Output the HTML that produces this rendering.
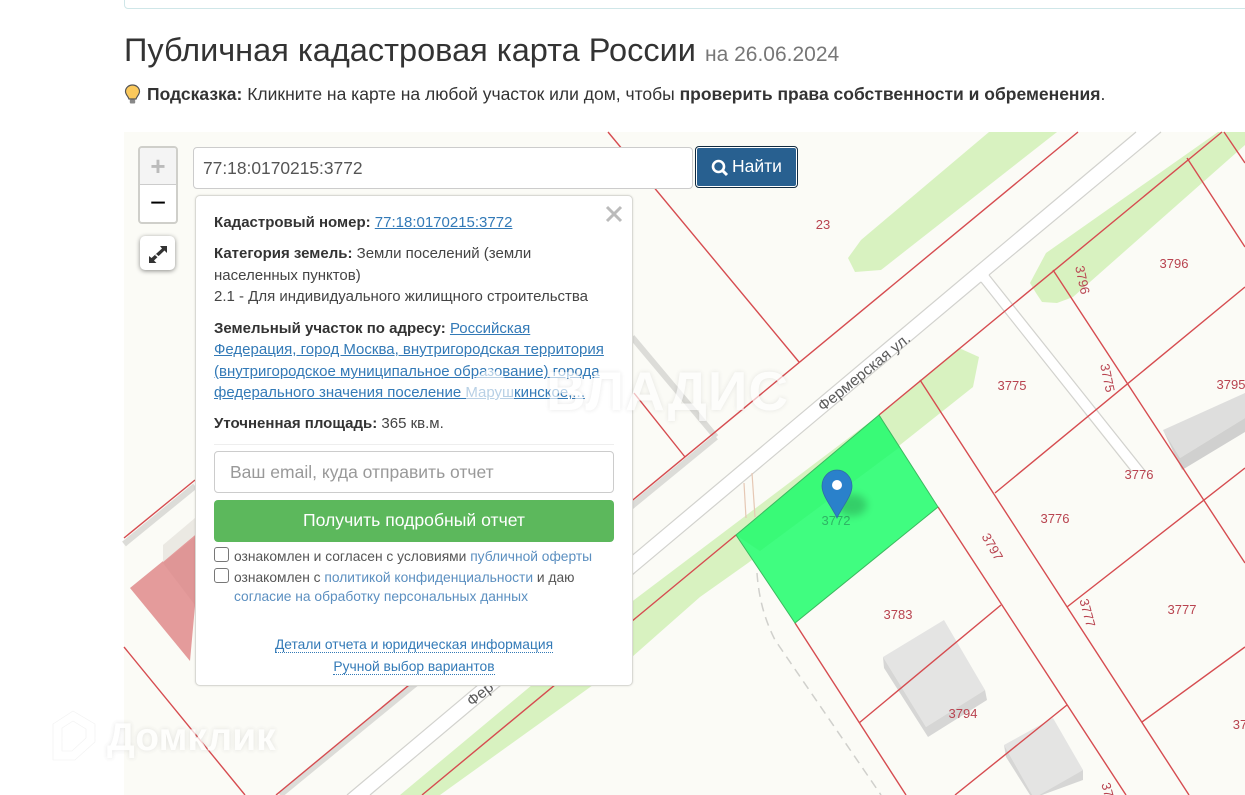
<!DOCTYPE html>
<html lang="ru"><head><meta charset="utf-8"><title>Публичная кадастровая карта России</title>
<style>
html,body{margin:0;padding:0;background:#fff;width:1245px;height:795px;overflow:hidden}
body{position:relative;font-family:"Liberation Sans","Noto Sans CJK SC",sans-serif;color:#333;font-size:15px}
.a{position:absolute;white-space:nowrap}
a{color:#337ab7;text-decoration:underline}
#panel{position:absolute;left:195px;top:195px;width:436px;height:489px;background:#fff;border:1px solid #d9d9d4;border-radius:5px;box-shadow:0 0 2px rgba(0,0,0,.12)}
.t{position:absolute;left:18px;white-space:nowrap;line-height:20px;height:20px;color:#444;font-size:15px}
.t b{color:#333}
.s{font-size:13.8px;color:#555}
.wm{position:absolute;color:#fff;font-weight:bold;white-space:nowrap;text-shadow:0 0 5px rgba(90,90,90,.22)}
.cb{position:absolute;left:18px;width:13px;height:13px;border:1px solid #777;border-radius:3px;background:#fff}
.lk{color:#5b8fc0;text-decoration:none}
.d{color:#337ab7;text-decoration:none;border-bottom:1px dotted #337ab7}
</style></head><body>
<div style="position:absolute;left:124px;top:-20px;width:1140px;height:27px;border:1px solid #cfe6e8;border-radius:4px"></div>
<div class="a" style="left:124px;top:30px;font-size:32.5px;line-height:40px;color:#333">Публичная кадастровая карта России</div>
<div class="a" style="left:705px;top:35px;font-size:21px;line-height:40px;color:#777">на 26.06.2024</div>
<svg style="position:absolute;left:124px;top:84px" width="17" height="21" viewBox="0 0 17 21"><path d="M8.500 1C4.500 1 1.500 4 1.500 7.500C1.500 10.500 4 12 5 15H12C13 12 15.500 10.500 15.500 7.500C15.500 4 12.500 1 8.500 1Z" fill="#fbc95c" stroke="#555" stroke-width="1.200"/><rect x="5.800" y="15.500" width="5.400" height="4" rx="1" fill="#888"/></svg>
<div class="a" style="left:147px;top:84px;font-size:17.5px;line-height:20px;color:#333"><b>Подсказка:</b> Кликните на карте на любой участок или дом, чтобы <b>проверить права собственности и обременения</b>.</div>

<svg style="position:absolute;left:0;top:0" width="1245" height="795" viewBox="0 0 1245 795">
<rect x="124" y="132" width="1121" height="663" fill="#fbfbf6"/>
<g fill="#d8f2c0">
<path d="M989 132H1057L881 270L855 272L848 258L861 240Z"/>
<path d="M1218 132H1245V145L1073 297L1057 303L1042 302L1036 293L1030 283L1046 253Z"/>
<path d="M959 348L979 357L973 387L900 445L748 563L700 597L632 657L440 795H400L634 600L879 415Z"/>
</g>
<g fill="none" stroke="#dcdcd8" stroke-width="6"><path d="M716 437L280 795"/><path d="M632 337L716 437"/><path d="M195 486L124 544"/></g>
<path d="M1136 132L347 795H370L1161 132Z" fill="#fff"/>
<path d="M981 282L989 275L1144 470L1132 470Z" fill="#fff"/>
<g fill="none" stroke="#d2d2ce" stroke-width="1.200">
<path d="M1136 132L347 795"/><path d="M1161 132L989 275"/><path d="M981 282L370 795"/>
<path d="M989 275L1146 472"/><path d="M981 282L1132 472"/>
</g>
<path d="M744 483L746 518M752 473L755 517" stroke="#e6c8b4" stroke-width="1.200" fill="none"/>
<path d="M757 573C759 600 765 620 775 640L881 795" fill="none" stroke="#d0d0cc" stroke-width="1.500" stroke-dasharray="9 6"/>
<path d="M879 415L938 507L795 623L736 535Z" fill="#40fd80"/>
<path d="M879 415L900 447L760 551L736 535Z" fill="#36f874" opacity=".7"/>
<path d="M944 620L883 657L926 727L985 690Z" fill="#e4e4e3"/><path d="M883 657L884 668L928 737L987 700L985 690L926 727Z" fill="#d6d6d5"/>
<path d="M1053 718L1004 745L1034 798L1083 770Z" fill="#e4e4e3"/><path d="M1004 745L1006 757L1030 795H1042L1083 780V770L1034 798Z" fill="#d6d6d5"/>
<path d="M1163 430L1245 393V418L1180 458Z" fill="#dededd"/><path d="M1163 430L1180 458L1245 418V432L1182 470Z" fill="#d0d0cf"/>
<path d="M130 588L195 535V606L190 661Z" fill="#e49b9b"/><path d="M163 563L195 537V605Z" fill="#df9696"/><path d="M163 545L195 518V535L163 562Z" fill="#ebe9e3"/>
<g fill="none" stroke="#d64c50" stroke-width="1.400">
<path d="M1078 132L276 795"/><path d="M608 132L799 362"/><path d="M685 457L634 393"/>
<path d="M1222 132L879 415M736 535L422 795"/>
<path d="M1053 270L1245 563"/><path d="M1224 132L1245 163"/><path d="M1187 158L1245 247"/>
<path d="M1245 287L995 493"/><path d="M920 380L1189 795"/><path d="M938 507L1126 795"/>
<path d="M795 623L906 795"/><path d="M1001 605L859 723"/><path d="M1067 705L955 795"/>
<path d="M1245 468L1067 607"/><path d="M1245 647L1142 722"/><path d="M195 480L124 538"/><path d="M124 647L245 795"/>
</g>
<path d="M879 415L938 507L795 623L736 535Z" fill="none" stroke="#3bb95f" stroke-width="1"/>
<g fill="#b8434f" font-family="'Liberation Sans Narrow','Liberation Sans',sans-serif" font-size="13" text-anchor="middle">
<text x="823" y="229">23</text><text x="1174" y="268">3796</text><text x="1012" y="390">3775</text><text x="1231" y="389">3795</text>
<text x="1139" y="479">3776</text><text x="1055" y="523">3776</text><text x="898" y="619">3783</text><text x="963" y="718">3794</text><text x="1182" y="614">3777</text><text x="1240" y="729">37</text>
<text transform="translate(1082 280) rotate(78)" y="4">3796</text>
<text transform="translate(1107 378) rotate(78)" y="4">3775</text>
<text transform="translate(992 547) rotate(60)" y="4">3797</text>
<text transform="translate(1087 613) rotate(75)" y="4">3777</text>
<text transform="translate(1107 790) rotate(75)" y="4">37</text>
<text x="836" y="525" fill="#2fb565">3772</text>
</g>
<g fill="#5a5a5a" font-size="15.500" font-family="'Liberation Sans',sans-serif">
<text transform="translate(823 412) rotate(-39)">Фермерская ул.</text>
<text transform="translate(472 707) rotate(-39)">Фер</text>
</g>
<ellipse cx="852" cy="505" rx="15" ry="11" fill="#000" opacity=".18" style="filter:blur(4px)"/>
<path d="M837 470C829 470 822 477 822 486C822 496 832 507 837 518C842 507 852 496 852 486C852 477 845 470 837 470Z" fill="#2a81cb" stroke="#2f6ea6" stroke-width=".8"/>
<circle cx="837" cy="485" r="5" fill="#fff"/>
</svg>

<div style="position:absolute;left:138px;top:146px;width:36px;height:74px;border:2px solid #cfcfca;border-radius:4px;background:#fff;overflow:hidden">
<div style="height:36px;background:#f4f4f4;border-bottom:1px solid #ccc;color:#bbb;font:bold 26px/36px 'Liberation Sans',sans-serif;text-align:center">+</div>
<div style="height:37px;color:#000;font:normal 28px/36px 'Liberation Sans',sans-serif;text-align:center">−</div>
</div>
<div style="position:absolute;left:140px;top:236px;width:35px;height:34px;background:#fff;border-radius:5px;box-shadow:0 1px 5px rgba(0,0,0,.45)">
<svg width="35" height="34" viewBox="0 0 35 34"><path d="M20 10H27V17L24.500 14.500L14 24.500L16.500 27H9V20L11.500 22L22 12.500Z" fill="#333"/><path d="M15.500 18.500L18.500 21" stroke="#fff" stroke-width="1.500"/></svg>
</div>
<div class="a" style="left:193px;top:147px;width:489px;height:40px;border:1px solid #ccc;border-radius:4px;background:#fff;font-size:17.4px;line-height:41px;padding-left:9px;color:#555">77:18:0170215:3772</div>
<div style="position:absolute;left:696px;top:147px;width:99px;height:38px;background:#286090;border:1px solid #fff;outline:1px solid #122b40;border-radius:3px;color:#fff;font-size:17.5px;line-height:36px;white-space:nowrap">
<svg style="position:absolute;left:14px;top:11px" width="18" height="18" viewBox="0 0 18 18"><circle cx="7.500" cy="7.500" r="5.500" fill="none" stroke="#fff" stroke-width="2.600"/><path d="M11.500 11.500L16 16" stroke="#fff" stroke-width="3"/></svg>
<span style="position:absolute;left:35px">Найти</span></div>

<div id="panel">
<div class="t" style="top:17px"><b>Кадастровый номер:</b> <a>77:18:0170215:3772</a></div>
<div class="t" style="top:48px"><b>Категория земель:</b> Земли поселений (земли</div>
<div class="t" style="top:70px">населенных пунктов)</div>
<div class="t" style="top:91px">2.1 - Для индивидуального жилищного строительства</div>
<div class="t" style="top:123px"><b>Земельный участок по адресу:</b> <a>Российская</a></div>
<div class="t" style="top:144px"><a>Федерация, город Москва, внутригородская территория</a></div>
<div class="t" style="top:166px"><a>(внутригородское муниципальное образование) города</a></div>
<div class="t" style="top:187px"><a>федерального значения поселение Марушкинское,...</a></div>
<div class="t" style="top:218px"><b>Уточненная площадь:</b> 365 кв.м.</div>
<div style="position:absolute;left:18px;top:248px;width:400px;height:1px;background:#eee"></div>
<div style="position:absolute;left:18px;top:255px;width:383px;height:40px;border:1px solid #ccc;border-radius:4px;font-size:17.5px;line-height:41px;padding-left:15px;color:#999">Ваш email, куда отправить отчет</div>
<div style="position:absolute;left:18px;top:304px;width:400px;height:42px;background:#5cb85c;border-radius:4px;color:#fff;font-size:17.6px;line-height:41px;text-align:center">Получить подробный отчет</div>
<div class="cb" style="top:351px"></div>
<div class="t s" style="left:38px;top:351px">ознакомлен и согласен с условиями <span class="lk">публичной оферты</span></div>
<div class="cb" style="top:372px"></div>
<div class="t s" style="left:38px;top:372px">ознакомлен с <span class="lk">политикой конфиденциальности</span> и даю</div>
<div class="t s" style="left:38px;top:391px"><span class="lk">согласие на обработку персональных данных</span></div>
<div class="t s" style="left:0;width:436px;text-align:center;top:439px"><span class="d">Детали отчета и юридическая информация</span></div>
<div class="t s" style="left:0;width:436px;text-align:center;top:461px"><span class="d">Ручной выбор вариантов</span></div>
<svg style="position:absolute;left:409px;top:9px" width="18" height="18" viewBox="0 0 18 18"><path d="M2 2L16 16M16 2L2 16" stroke="#bbb" stroke-width="3"/></svg>
</div>

<div class="wm" style="left:546px;top:362px;font-size:55px;line-height:58px;opacity:.65;letter-spacing:1px">ВЛАДИС</div>
<svg style="position:absolute;left:464px;top:366px;opacity:.65" width="52" height="56" viewBox="0 0 52 56"><path d="M26 2L50 18V54H2V18Z" fill="#fff"/></svg>
<div class="wm" style="left:107px;top:717px;font-size:39px;line-height:42px;opacity:.75">Домклик</div>
<svg style="position:absolute;left:48px;top:708px;opacity:.75" width="50" height="55" viewBox="0 0 50 55"><path d="M25 3L47 16V34L27 52H5V16Z M25 13L14 20V43H24L38 30V21Z" fill="#fff" fill-rule="evenodd" stroke="#ececec" stroke-width=".6"/></svg>
</body></html>
